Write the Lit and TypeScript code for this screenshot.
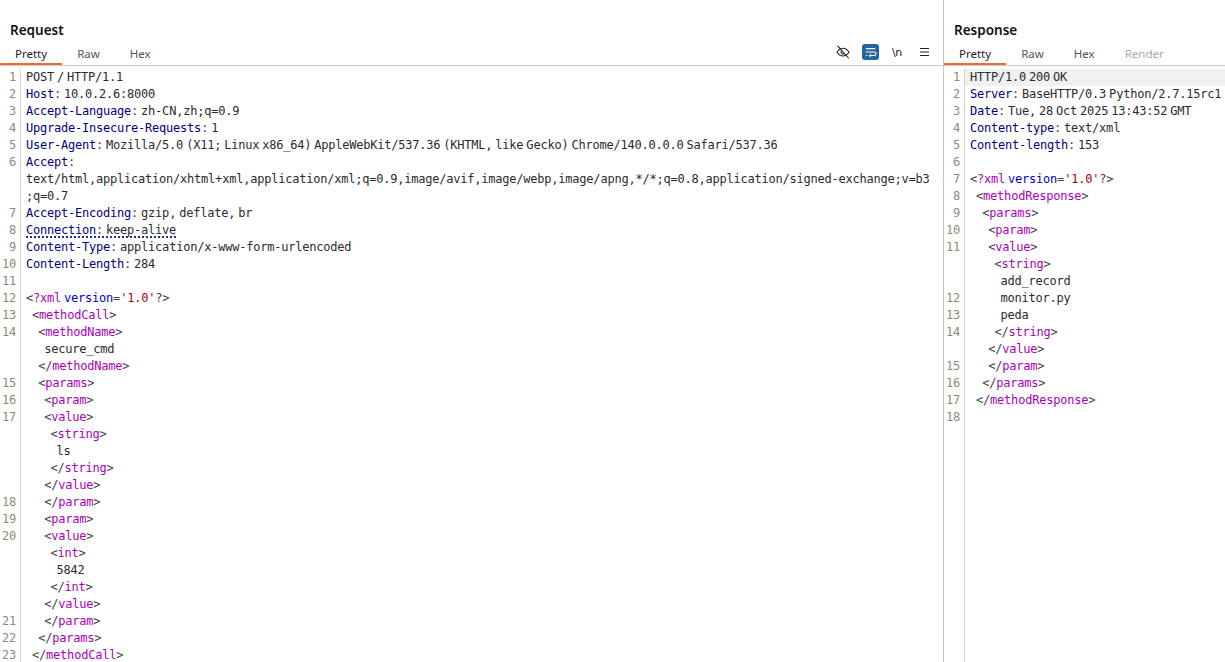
import { LitElement, html, css, nothing, TemplateResult } from "lit";
import { customElement } from "lit/decorators.js";

type Line = { n?: number; i?: number; c: TemplateResult | string; hl?: boolean };

const hdr = (name: string, value: string) =>
  html`<span class="hn">${name}</span><span class="p">:</span> <span>${value}</span>`;
const open = (t: string) => html`<span class="b">&lt;</span><span class="t">${t}</span><span class="b">&gt;</span>`;
const close = (t: string) => html`<span class="b">&lt;/</span><span class="t">${t}</span><span class="b">&gt;</span>`;
const decl = html`<span class="b">&lt;</span><span class="t">?xml</span> <span class="a">version</span><span class="b">=</span><span class="v">'1.0'</span><span class="b">?&gt;</span>`;

const request: Line[] = [
  { n: 1, c: "POST / HTTP/1.1" },
  { n: 2, c: hdr("Host", "10.0.2.6:8000") },
  { n: 3, c: hdr("Accept-Language", "zh-CN,zh;q=0.9") },
  { n: 4, c: hdr("Upgrade-Insecure-Requests", "1") },
  { n: 5, c: hdr("User-Agent", "Mozilla/5.0 (X11; Linux x86_64) AppleWebKit/537.36 (KHTML, like Gecko) Chrome/140.0.0.0 Safari/537.36") },
  { n: 6, c: html`<span class="hn">Accept</span><span class="p">:</span>` },
  { c: "text/html,application/xhtml+xml,application/xml;q=0.9,image/avif,image/webp,image/apng,*/*;q=0.8,application/signed-exchange;v=b3" },
  { c: ";q=0.7" },
  { n: 7, c: hdr("Accept-Encoding", "gzip, deflate, br") },
  { n: 8, c: html`<span class="dotted">${hdr("Connection", "keep-alive")}</span>` },
  { n: 9, c: hdr("Content-Type", "application/x-www-form-urlencoded") },
  { n: 10, c: hdr("Content-Length", "284") },
  { n: 11, c: "" },
  { n: 12, c: decl },
  { n: 13, i: 1, c: open("methodCall") },
  { n: 14, i: 2, c: open("methodName") },
  { i: 3, c: "secure_cmd" },
  { i: 2, c: close("methodName") },
  { n: 15, i: 2, c: open("params") },
  { n: 16, i: 3, c: open("param") },
  { n: 17, i: 3, c: open("value") },
  { i: 4, c: open("string") },
  { i: 5, c: "ls" },
  { i: 4, c: close("string") },
  { i: 3, c: close("value") },
  { n: 18, i: 3, c: close("param") },
  { n: 19, i: 3, c: open("param") },
  { n: 20, i: 3, c: open("value") },
  { i: 4, c: open("int") },
  { i: 5, c: "5842" },
  { i: 4, c: close("int") },
  { i: 3, c: close("value") },
  { n: 21, i: 3, c: close("param") },
  { n: 22, i: 2, c: close("params") },
  { n: 23, i: 1, c: close("methodCall") },
];

const response: Line[] = [
  { n: 1, c: "HTTP/1.0 200 OK", hl: true },
  { n: 2, c: hdr("Server", "BaseHTTP/0.3 Python/2.7.15rc1") },
  { n: 3, c: hdr("Date", "Tue, 28 Oct 2025 13:43:52 GMT") },
  { n: 4, c: hdr("Content-type", "text/xml") },
  { n: 5, c: hdr("Content-length", "153") },
  { n: 6, c: "" },
  { n: 7, c: decl },
  { n: 8, i: 1, c: open("methodResponse") },
  { n: 9, i: 2, c: open("params") },
  { n: 10, i: 3, c: open("param") },
  { n: 11, i: 3, c: open("value") },
  { i: 4, c: open("string") },
  { i: 5, c: "add_record" },
  { n: 12, i: 5, c: "monitor.py" },
  { n: 13, i: 5, c: "peda" },
  { n: 14, i: 4, c: close("string") },
  { i: 3, c: close("value") },
  { n: 15, i: 3, c: close("param") },
  { n: 16, i: 2, c: close("params") },
  { n: 17, i: 1, c: close("methodResponse") },
  { n: 18, c: "" },
];

@customElement("app-root")
export class AppRoot extends LitElement {
  static styles = css`
    :host {
      display: flex;
      width: 1225px;
      height: 662px;
      overflow: hidden;
      background: #fff;
      color: #2b2b2b;
    }
    .pane { display: flex; flex-direction: column; min-width: 0; }
    .left { width: 943px; flex: none; border-right: 1px solid #c4c4c4; }
    .right { flex: 1; }
    .title {
      flex: none;
      font: 600 13.5px "Noto Sans", sans-serif;
      height: 43px;
      padding: 21px 0 0 10px;
      box-sizing: border-box;
      line-height: 18px;
      color: #111;
    }
    .tabbar {
      flex: none;
      display: flex;
      align-items: stretch;
      height: 23px;
      box-sizing: border-box;
      border-bottom: 1px solid #c9c9c9;
      font: 11.5px "Noto Sans", sans-serif;
    }
    .tab {
      padding: 0 15px;
      line-height: 22px;
      color: #555;
      height: 22px;
      box-sizing: border-box;
    }
    .tab.on { color: #222; border-bottom: 2px solid #f26a2e; }
    .tab.off { color: #a8a8a8; }
    .tools {
      margin-left: auto;
      display: flex;
      align-items: center;
      padding-right: 5.5px;
      padding-bottom: 4px;
    }
    .tools svg { display: block; }
    .tool { width: 27px; display: flex; justify-content: center; align-items: center; }
    .nl { font: 11px "DejaVu Sans", sans-serif; color: #222; letter-spacing: -0.3px; }
    .code {
      flex: 1;
      min-height: 0;
      overflow: hidden;
      padding-top: 3px;
      font: 12px/17px "DejaVu Sans Mono", monospace;
      letter-spacing: -0.22px;
      word-spacing: -4px;
      display: flex;
      flex-direction: column;
    }
    .row { display: flex; height: 17px; flex: none; }
    .gut {
      width: 16px;
      flex: none;
      padding-right: 4px;
      text-align: right;
      color: #8c8a78;
      border-right: 1px solid #d4d4d4;
    }
    .txt { flex: 1; padding-left: 5px; min-width: 0; color: #2b2b2b; white-space: pre; }
    .row.hl .txt { background: #f0f0f0; }
    .hn { color: #000080; }
    .p { color: #444; }
    .b { color: #444; }
    .t { color: #aa00bb; }
    .a { color: #0000c8; }
    .v { color: #a80000; }
    .dotted { border-bottom: 2px dotted #2030a0; display: inline-block; height: 14px; }
    .spacer { flex: 1; border-right: 1px solid #d4d4d4; width: 21px; box-sizing: border-box; }
  `;

  private renderLines(lines: Line[]) {
    return html`<div class="code">
      ${lines.map(
        (l) => html`<div class="row ${l.hl ? "hl" : ""}">
          <div class="gut">${l.n ?? nothing}</div>
          <div class="txt" style="padding-left:${5 + (l.i ?? 0) * 6.1}px">${l.c}</div>
        </div>`
      )}
      <div class="spacer"></div>
    </div>`;
  }

  render() {
    return html`
      <section class="pane left">
        <div class="title">Request</div>
        <div class="tabbar">
          <div class="tab on">Pretty</div>
          <div class="tab">Raw</div>
          <div class="tab">Hex</div>
          <div class="tools">
            <div class="tool">
              <svg width="14" height="14" viewBox="0 0 14 14" fill="none" stroke="#222" stroke-width="1.100" stroke-linecap="round">
                <path d="M1 7.200C2.800 4.400 4.700 3.300 7 3.300s4.200 1.100 6 3.900c-1.800 2.700-3.700 3.800-6 3.800s-4.200-1.100-6-3.800z" />
                <path d="M5.400 5.800a2.100 2.100 0 0 0 2.900 2.900" />
                <path d="M1.800 1.200L12.500 13" />
              </svg>
            </div>
            <div class="tool">
              <svg width="17" height="16" viewBox="0 0 17 16" fill="none">
                <rect width="17" height="16" rx="3" fill="#23659f" />
                <path d="M3.800 4.600h9.500M3.800 8h8.400a1.700 1.700 0 0 1 0 3.500H7.500M3.800 11.500h1.700" stroke="#fff" stroke-width="1.100" />
                <path d="M9 9.800L7.200 11.500L9 13.200" stroke="#fff" stroke-width="1" />
              </svg>
            </div>
            <div class="tool"><span class="nl">\\n</span></div>
            <div class="tool">
              <svg width="11" height="10" viewBox="0 0 11 10" stroke="#222" stroke-width="1.100">
                <path d="M1 1.500h9M1 5h9M1 8.500h9" />
              </svg>
            </div>
          </div>
        </div>
        ${this.renderLines(request)}
      </section>
      <section class="pane right">
        <div class="title">Response</div>
        <div class="tabbar">
          <div class="tab on">Pretty</div>
          <div class="tab">Raw</div>
          <div class="tab">Hex</div>
          <div class="tab off">Render</div>
        </div>
        ${this.renderLines(response)}
      </section>
    `;
  }
}
